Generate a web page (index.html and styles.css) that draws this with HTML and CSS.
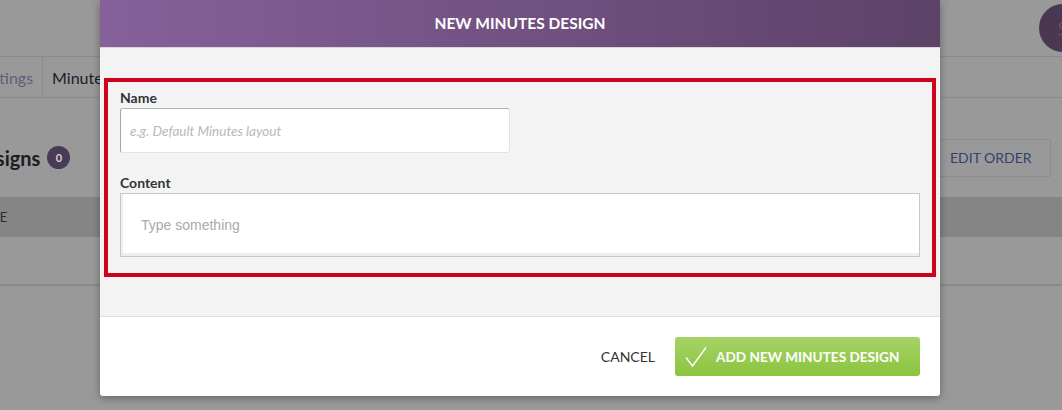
FILE: index.html
```html
<!DOCTYPE html>
<html lang="en">
<head>
<meta charset="utf-8">
<title>New Minutes Design</title>
<link rel="stylesheet" href="styles.css">
</head>
<body>
<div class="page">
  <header class="topbar">
    <div class="avatar">S</div>
  </header>
  <nav class="tabs">
    <a class="tab tab-first">Settings</a>
    <a class="tab tab-active">Minutes Designs</a>
  </nav>
  <section class="section-head">
    <h1 class="title">Minutes Designs <span class="badge">0</span></h1>
    <button class="edit-order">EDIT ORDER</button>
  </section>
  <div class="table">
    <div class="thead"><span class="th">NAME</span></div>
    <div class="trow"></div>
  </div>
</div>

<div class="modal">
  <div class="modal-header">NEW MINUTES DESIGN</div>
  <div class="modal-body">
    <div class="form-box">
      <label class="label">Name</label>
      <div class="input"><span class="ph-italic">e.g. Default Minutes layout</span></div>
      <label class="label label-content">Content</label>
      <div class="editor"><span class="ph-sans">Type something</span></div>
    </div>
  </div>
  <div class="modal-footer">
    <button class="cancel">CANCEL</button>
    <button class="primary">
      <svg class="check" width="22" height="22" viewBox="0 0 22 22"><path d="M1 11.5 L7.5 20 L21 1.5" fill="none" stroke="#fff" stroke-width="1.4"/></svg>
      <span>ADD NEW MINUTES DESIGN</span>
    </button>
  </div>
</div>
</body>
</html>
```

FILE: styles.css
```css
html, body {
  margin: 0;
  padding: 0;
  height: 100%;
  overflow: hidden;
}
body {
  background: #999999;
  font-family: Lato, "Open Sans", sans-serif;
  position: relative;
}
.page {
  width: 1062px;
  overflow: hidden;
}
.topbar {
  height: 57px;
  display: flex;
  justify-content: flex-end;
  align-items: flex-start;
  border-bottom: 1px solid #8a8a8a;
  box-sizing: border-box;
}
.avatar {
  width: 48px;
  height: 48px;
  margin-top: 4px;
  margin-right: -25px;
  border-radius: 50%;
  background: #4a3752;
  color: #5f4f66;
  font-size: 20px;
  line-height: 48px;
  text-align: center;
}
.tabs {
  height: 41px;
  display: flex;
  border-bottom: 1px solid #8a8a8a;
  box-sizing: border-box;
}
.tab {
  padding: 0 9px;
  font-size: 16px;
  line-height: 42px;
  color: #675a78;
  border-right: 1px solid #8a8a8a;
  white-space: nowrap;
}
.tab-first {
  margin-left: -32px;
}
.tab-active {
  color: #1e1b26;
}
.section-head {
  display: flex;
  justify-content: space-between;
  align-items: center;
  height: 99px;
  box-sizing: border-box;
  padding: 20px 11px 0 0;
}
.title {
  margin: 0 0 0 -108px;
  font-size: 20px;
  font-weight: 700;
  color: #1c1c22;
  display: flex;
  align-items: center;
  gap: 7px;
  white-space: nowrap;
}
.badge {
  width: 23px;
  height: 23px;
  border-radius: 50%;
  background: #4a3a56;
  color: #d8d0dc;
  font-size: 11px;
  font-weight: 700;
  line-height: 23px;
  text-align: center;
}
.edit-order {
  width: 112px;
  height: 38px;
  padding: 0 0 0 10px;
  text-align: left;
  background: transparent;
  border: 1px solid #8c8c8c;
  border-radius: 2px;
  font-family: Lato, sans-serif;
  font-size: 14px;
  color: #34406e;
}
.table {
  display: flex;
  flex-direction: column;
}
.thead {
  height: 40px;
  background: #858585;
  display: flex;
  align-items: center;
}
.th {
  margin-left: -31px;
  font-size: 13px;
  color: #2a2a2a;
}
.trow {
  height: 47px;
  border-bottom: 2px solid #8a8a8a;
}

/* Modal (overlay) */
.modal {
  position: absolute;
  left: 100px;
  top: 0;
  width: 840px;
  background: #ffffff;
  border-radius: 0 0 3px 3px;
  box-shadow: 0 2px 8px rgba(0, 0, 0, 0.35);
}
.modal-header {
  height: 48px;
  background: linear-gradient(to right, #86619a, #5d4268);
  color: #ffffff;
  font-weight: 700;
  font-size: 15.5px;
  line-height: 46px;
  text-align: center;
  border-bottom: 1px solid #d8d8d8;
  box-sizing: border-box;
}
.modal-body {
  background: #f3f3f3;
  padding: 30px 4px 39px;
  border-bottom: 1px solid #dddddd;
}
.form-box {
  border: 4px solid #d0021b;
  padding: 8px 12px 16px;
  display: flex;
  flex-direction: column;
  align-items: flex-start;
}
.label {
  font-size: 14px;
  font-weight: 700;
  color: #333333;
  line-height: 16px;
  margin-bottom: 2px;
}
.label-content {
  margin-top: 22px;
}
.input {
  width: 390px;
  height: 45px;
  box-sizing: border-box;
  background: #ffffff;
  border: 1px solid;
  border-color: #b4b4b4 #e2e2e2 #e2e2e2 #a6a6a6;
  border-radius: 3px;
  padding: 0 9px;
  display: flex;
  align-items: center;
}
.ph-italic {
  font-style: italic;
  font-size: 13.5px;
  color: #b8b8b8;
}
.editor {
  align-self: stretch;
  height: 64px;
  box-sizing: border-box;
  background: #ffffff;
  border: 1px solid #c8c8c8;
  box-shadow: inset 2px -3px 0 #eeeeee;
  padding: 0 20px;
  display: flex;
  align-items: center;
}
.ph-sans {
  font-family: "Liberation Sans", Arial, sans-serif;
  font-size: 14px;
  color: #aaaaaa;
}
.modal-footer {
  height: 79px;
  display: flex;
  justify-content: flex-end;
  align-items: center;
  gap: 20px;
  padding: 0 20px;
}
.cancel {
  background: transparent;
  border: 0;
  padding: 0;
  font-family: Lato, sans-serif;
  font-size: 14px;
  color: #333333;
}
.primary {
  height: 39px;
  width: 245px;
  display: flex;
  align-items: center;
  gap: 9px;
  padding: 0 10px;
  border: 0;
  border-radius: 3px;
  background: linear-gradient(to bottom, #a6d366, #8bc43f);
  color: #ffffff;
  font-family: Lato, sans-serif;
  font-size: 13.6px;
  font-weight: 700;
}
.check {
  flex: none;
}
```
